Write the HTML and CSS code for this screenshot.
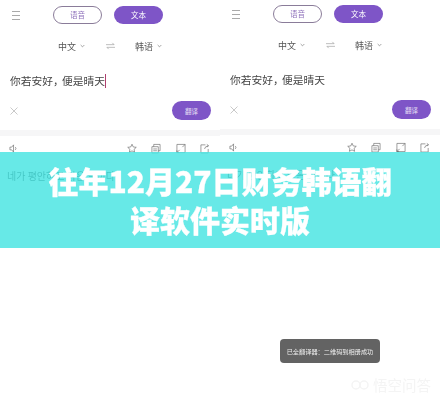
FILE: index.html
```html
<!DOCTYPE html>
<html lang="zh">
<head>
<meta charset="utf-8">
<title>往年12月27日财务韩语翻译软件实时版</title>
<link rel="stylesheet" href="styles.css">
</head>
<body>
<main class="shots">
  <section class="phone phone-left">
    <header class="topbar">
      <svg class="menu" viewBox="0 0 8 9"><path d="M0 .5h8M0 4.500h8M0 8.500h8"/></svg>
      <span class="pill pill-outline">语音</span>
      <span class="pill pill-solid">文本</span>
    </header>
    <div class="langs">
      <span class="lang">中文<svg class="chev" viewBox="0 0 6 4"><path d="M.8.8 3 3l2.200-2.200"/></svg></span>
      <svg class="swap" viewBox="0 0 10 8"><path d="M0 2.500h9L7 .5M10 5.500H1l2 2"/></svg>
      <span class="lang">韩语<svg class="chev" viewBox="0 0 6 4"><path d="M.8.8 3 3l2.200-2.200"/></svg></span>
    </div>
    <p class="source">你若安好<span class="comma">，</span>便是晴天<i class="caret"></i></p>
    <div class="actions">
      <svg class="close" viewBox="0 0 8 8"><path d="M.5.5l7 7M7.500.5l-7 7"/></svg>
      <span class="go">翻译</span>
    </div>
    <div class="divider"></div>
    <div class="tools">
      <svg class="ico" viewBox="0 0 11 11"><path d="M1 4h2l2-2.500V9.500L3 7H1zM7 4q1.300 1.500 0 3"/></svg>
      <div class="tool-right">
        <svg class="ico" viewBox="0 0 11 11"><path d="M5.500.8l1.400 3 3.300.4-2.400 2.200.6 3.300-2.900-1.600-2.900 1.600.6-3.300L.8 4.200l3.300-.4z"/></svg>
        <svg class="ico" viewBox="0 0 11 11"><path d="M1 3.500h7v7H1zM3 3.500V1h7v7H8M2.500 6h4M2.500 8h4"/></svg>
        <svg class="ico" viewBox="0 0 11 11"><path d="M1 1h9v9H1zM1 10l3-3M1 7.500V10h2.500M10 1L7 4"/></svg>
        <svg class="ico" viewBox="0 0 11 11"><path d="M6 1.500H1v9h8V6M5 6q.5-3 4-3.500M7.500 1l2 1.500-2 1.500"/></svg>
      </div>
    </div>
    <p class="result">네가 평안하고 맑은 날이다</p>
  </section>
  <section class="phone phone-right">
    <header class="topbar">
      <svg class="menu" viewBox="0 0 8 9"><path d="M0 .5h8M0 4.500h8M0 8.500h8"/></svg>
      <span class="pill pill-outline">语音</span>
      <span class="pill pill-solid">文本</span>
    </header>
    <div class="langs">
      <span class="lang">中文<svg class="chev" viewBox="0 0 6 4"><path d="M.8.8 3 3l2.200-2.200"/></svg></span>
      <svg class="swap" viewBox="0 0 10 8"><path d="M0 2.500h9L7 .5M10 5.500H1l2 2"/></svg>
      <span class="lang">韩语<svg class="chev" viewBox="0 0 6 4"><path d="M.8.8 3 3l2.200-2.200"/></svg></span>
    </div>
    <p class="source">你若安好<span class="comma">，</span>便是晴天</p>
    <div class="actions">
      <svg class="close" viewBox="0 0 8 8"><path d="M.5.5l7 7M7.500.5l-7 7"/></svg>
      <span class="go">翻译</span>
    </div>
    <div class="divider"></div>
    <div class="tools">
      <svg class="ico" viewBox="0 0 11 11"><path d="M1 4h2l2-2.500V9.500L3 7H1zM7 4q1.300 1.500 0 3"/></svg>
      <div class="tool-right">
        <svg class="ico" viewBox="0 0 11 11"><path d="M5.500.8l1.400 3 3.300.4-2.400 2.200.6 3.300-2.900-1.600-2.900 1.600.6-3.300L.8 4.200l3.300-.4z"/></svg>
        <svg class="ico" viewBox="0 0 11 11"><path d="M1 3.500h7v7H1zM3 3.500V1h7v7H8M2.500 6h4M2.500 8h4"/></svg>
        <svg class="ico" viewBox="0 0 11 11"><path d="M1 1h9v9H1zM1 10l3-3M1 7.500V10h2.500M10 1L7 4"/></svg>
        <svg class="ico" viewBox="0 0 11 11"><path d="M6 1.500H1v9h8V6M5 6q.5-3 4-3.500M7.500 1l2 1.500-2 1.500"/></svg>
      </div>
    </div>
    <p class="result">네가 평안하고 맑은 날이다</p>
  </section>
</main>
<div class="toast">已全翻译器：二维码到相册成功</div>
<div class="watermark">
  <svg class="wm-icon" viewBox="0 0 18 10"><circle cx="5" cy="5" r="4"/><circle cx="13" cy="5" r="4"/></svg>
  <span>悟空问答</span>
</div>
<div class="band"><h1 class="title">往年12月27日财务韩语翻译软件实时版</h1></div>
</body>
</html>
```
FILE: styles.css
```css
* { box-sizing: border-box; }
html, body { margin: 0; height: 100%; }
body {
  width: 440px;
  height: 400px;
  overflow: hidden;
  position: relative;
  background: #fff;
  font-family: "Noto Sans CJK SC", "Noto Sans", sans-serif;
}
.shots { display: grid; grid-template-columns: 220px 220px; height: 400px; }
.phone { display: flex; flex-direction: column; filter: blur(.35px); }
.phone-left { padding-top: 6px; }
.phone-right { padding-top: 5px; }
.topbar { display: flex; align-items: center; height: 18px; padding-left: 12px; }
.menu { width: 8px; height: 9px; margin-right: 33px; fill: none; stroke: #aaa; stroke-width: 1; }
.pill {
  width: 49px; height: 18px; border-radius: 9px;
  display: flex; align-items: center; justify-content: center;
  font-size: 7.500px; line-height: 1;
}
.pill-outline { border: 1px solid #8a7c99; color: #8e70bb; margin-right: 12px; }
.pill-solid { background: #7e55c7; color: #fff; }
.langs { display: flex; align-items: center; height: 18px; margin-top: 13px; padding-left: 58px; color: #555; }
.lang { display: flex; align-items: center; font-size: 9px; line-height: 1; }
.chev { width: 5px; height: 4px; margin-left: 4px; fill: none; stroke: #777; stroke-width: .8; }
.swap { width: 9px; height: 8px; margin: 0 20px 0 21px; fill: none; stroke: #999; stroke-width: .7; }
.source {
  margin: 16px 0 0; padding-left: 10px; height: 20px;
  display: flex; align-items: center;
  font-size: 10.750px; line-height: 20px; color: #444;
}
.comma { margin-right: -1.750px; }
.caret { width: 1px; height: 14px; background: #b0406e; }
.actions { display: flex; align-items: center; justify-content: space-between; height: 19px; margin-top: 10px; padding: 0 9px 0 10px; }
.close { width: 8px; height: 8px; fill: none; stroke: #bbb; stroke-width: .8; }
.go {
  width: 39px; height: 19px; border-radius: 10px; background: #7e55c7; color: #e9e0f6;
  display: flex; align-items: center; justify-content: center; font-size: 6.500px;
}
.divider { height: 6px; margin-top: 10px; background: #f6f6f7; }
.tools { display: flex; align-items: center; justify-content: space-between; height: 12px; margin-top: 6px; padding: 0 10px 0 9px; }
.tool-right { display: flex; gap: 14.500px; }
.ico { width: 10px; height: 11px; fill: none; stroke: #666; stroke-width: .7; }
.result {
  margin: 15px 0 0; padding-left: 7px;
  font-family: "Noto Sans CJK KR", "Noto Sans", sans-serif;
  font-size: 10px; line-height: 14px; color: #111; white-space: nowrap;
}
.band {
  position: absolute; left: 0; right: 0; top: 152px; height: 96px;
  background: rgba(76, 229, 227, .85);
  display: flex; align-items: center; justify-content: center;
  padding: 0 48px;
}
.title {
  margin: 0; width: 344px; text-align: center; color: #fff;
  font-size: 30px; line-height: 39px; font-weight: 900;
  -webkit-text-stroke: .3px #fff;
  filter: blur(.3px);
}
.toast {
  position: absolute; left: 280px; top: 339px; width: 100px; height: 24px;
  border-radius: 4px; background: #636363; color: #eee;
  display: flex; align-items: center; justify-content: center;
  font-size: 6.200px; white-space: nowrap; filter: blur(.3px);
}
.watermark {
  position: absolute; left: 351px; top: 377px;
  display: flex; align-items: center; gap: 4px;
  font-size: 14.500px; line-height: 16px; color: #f4f4f4; white-space: nowrap;
}
.wm-icon { width: 18px; height: 10px; fill: none; stroke: #f4f4f4; stroke-width: 1.500; }
```
